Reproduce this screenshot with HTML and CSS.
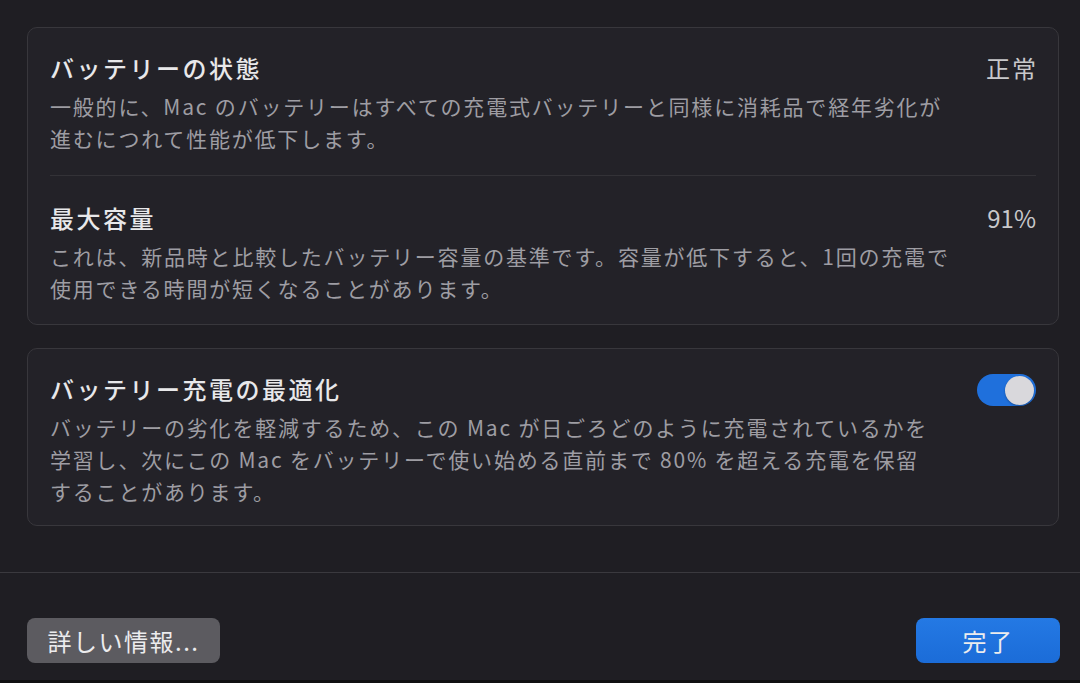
FILE: index.html
```html
<!DOCTYPE html>
<html lang="ja">
<head>
    <meta charset="UTF-8">
    <meta name="viewport" content="width=device-width, initial-scale=1.0">
    <title>バッテリー</title>
    <link rel="stylesheet" href="styles.css">
</head>
<body>
    <main class="sheet">
        <section class="group">
            <div class="row">
                <div class="row-text">
                    <h3>バッテリーの状態</h3>
                    <p>一般的に、Mac のバッテリーはすべての充電式バッテリーと同様に消耗品で経年劣化が<br>進むにつれて性能が低下します。</p>
                </div>
                <div class="value">正常</div>
            </div>
            <div class="row">
                <div class="row-text">
                    <h3>最大容量</h3>
                    <p>これは、新品時と比較したバッテリー容量の基準です。容量が低下すると、1回の充電で<br>使用できる時間が短くなることがあります。</p>
                </div>
                <div class="value num">91%</div>
            </div>
        </section>
        <section class="group">
            <div class="row">
                <div class="row-text">
                    <h3>バッテリー充電の最適化</h3>
                    <p>バッテリーの劣化を軽減するため、この Mac が日ごろどのように充電されているかを<br>学習し、次にこの Mac をバッテリーで使い始める直前まで 80% を超える充電を保留<br>することがあります。</p>
                </div>
                <div class="toggle on"><span class="knob"></span></div>
            </div>
        </section>
    </main>
    <footer class="actions">
        <button class="btn btn-gray">詳しい情報...</button>
        <button class="btn btn-blue">完了</button>
    </footer>
</body>
</html>
```

FILE: styles.css
```css
html, body {
    height: 100%;
}
body {
    margin: 0;
    background: #1f1e23;
    color: #e6e6e8;
    font-family: "Noto Sans CJK JP", "Noto Sans", sans-serif;
    display: flex;
    flex-direction: column;
    overflow: hidden;
}
.sheet {
    padding: 27px 21px 0 27px;
    display: flex;
    flex-direction: column;
    gap: 23px;
}
.group {
    background: #232228;
    border: 1px solid #38373c;
    border-radius: 10px;
    padding: 0 22px;
}
.row {
    display: flex;
    justify-content: space-between;
    align-items: flex-start;
    padding: 26px 0 21px;
}
.row + .row {
    border-top: 1px solid #333237;
    padding: 28px 0 20px;
}
.group:last-child .row {
    padding: 26px 0 18px;
}
.row h3 {
    margin: 0 0 8px;
    font-size: 24px;
    line-height: 28px;
    font-weight: 500;
    letter-spacing: 2.5px;
    color: #e8e8ea;
}
.row p {
    margin: 0;
    font-size: 21px;
    line-height: 32px;
    letter-spacing: 1.8px;
    color: #9e9da3;
    white-space: nowrap;
}
.value {
    font-size: 24px;
    line-height: 28px;
    letter-spacing: 2px;
    margin-right: -2px;
    color: #c8c8cb;
}
.value.num {
    letter-spacing: 0;
    margin-right: 0;
}
.toggle {
    width: 59px;
    height: 32px;
    border-radius: 16px;
    background: #3a393f;
    display: flex;
    align-items: center;
    padding: 0 2px;
    box-sizing: border-box;
    margin-top: -1px;
}
.toggle.on {
    background: #1f70dc;
    justify-content: flex-end;
}
.knob {
    width: 29px;
    height: 29px;
    border-radius: 50%;
    background: #d9d8dc;
    box-shadow: 0 1px 2px rgba(0, 0, 0, 0.3);
}
.actions {
    margin-top: 46px;
    border-top: 1px solid #3a393e;
    border-bottom: 3px solid #101012;
    flex: 1;
    display: flex;
    justify-content: space-between;
    align-items: flex-start;
    padding: 45px 20px 0 27px;
}
.btn {
    height: 45px;
    border: none;
    border-radius: 8px;
    font-family: inherit;
    font-size: 24px;
    letter-spacing: 1.5px;
    color: #ececee;
    cursor: pointer;
}
.btn-gray {
    width: 193px;
    background: #5c5b60;
}
.btn-blue {
    width: 144px;
    background: linear-gradient(#2479e4, #1b6cd8);
}
```
